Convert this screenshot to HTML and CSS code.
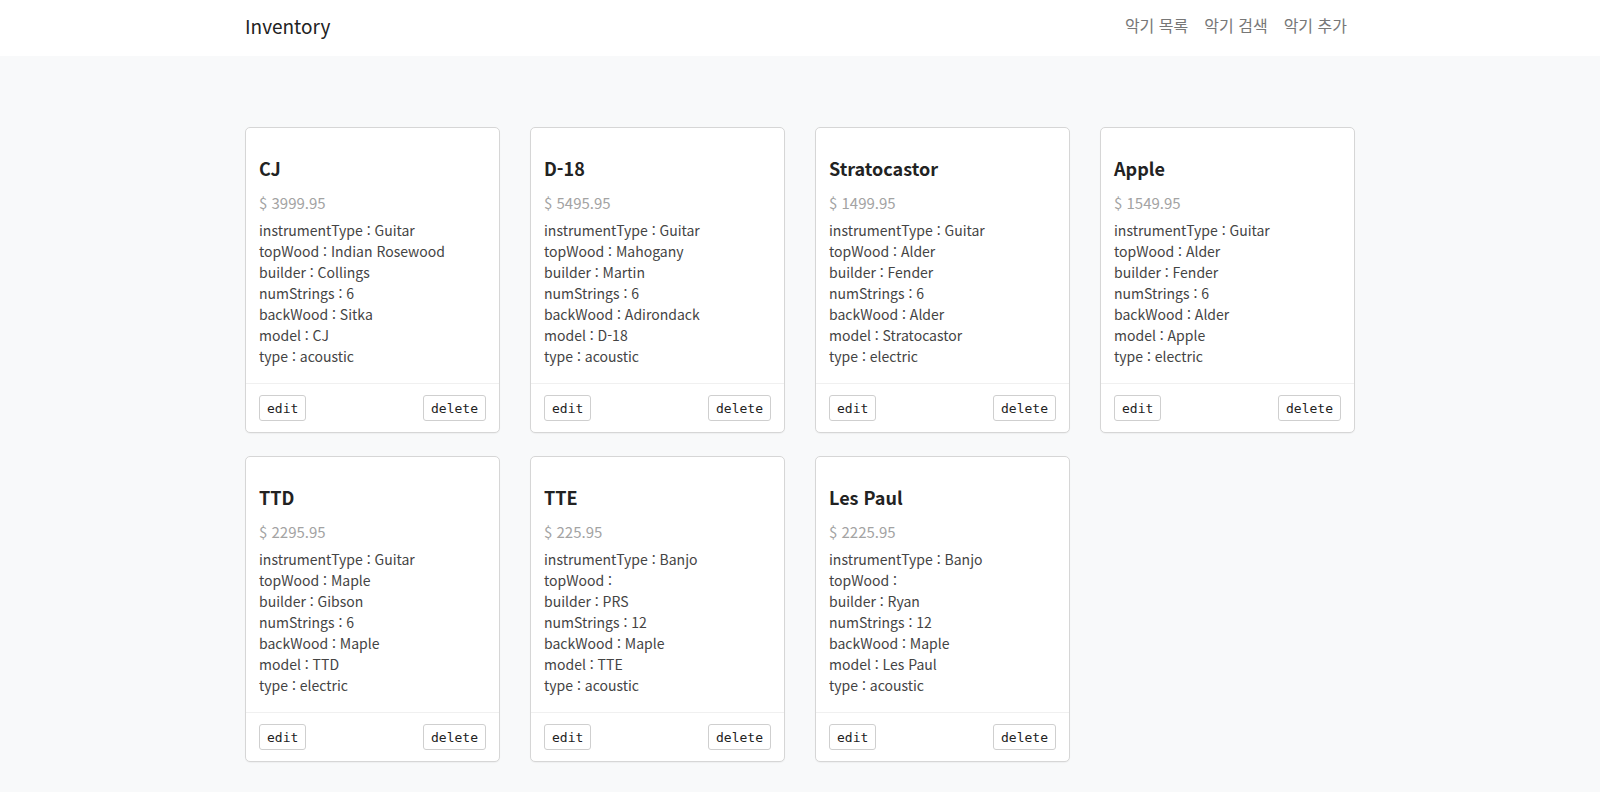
FILE: index.html
```html
<!DOCTYPE html>
<html lang="ko">
<head>
<meta charset="utf-8">
<title>Inventory</title>
<link rel="stylesheet" href="styles.css">
</head>
<body>
<nav class="navbar">
  <div class="container nav-inner">
    <a class="brand" href="#">Inventory</a>
    <ul class="nav-links">
      <li><a href="#">악기 목록</a></li>
      <li><a href="#">악기 검색</a></li>
      <li><a href="#">악기 추가</a></li>
    </ul>
  </div>
</nav>
<main class="container main">
  <div class="grid">
    <div class="card">
      <div class="card-body">
        <h5 class="card-title">CJ</h5>
        <p class="price">$ 3999.95</p>
        <p class="spec">instrumentType : Guitar</p>
        <p class="spec">topWood : Indian Rosewood</p>
        <p class="spec">builder : Collings</p>
        <p class="spec">numStrings : 6</p>
        <p class="spec">backWood : Sitka</p>
        <p class="spec">model : CJ</p>
        <p class="spec">type : acoustic</p>
      </div>
      <div class="card-footer"><button class="btn">edit</button><button class="btn">delete</button></div>
    </div>
    <div class="card">
      <div class="card-body">
        <h5 class="card-title">D-18</h5>
        <p class="price">$ 5495.95</p>
        <p class="spec">instrumentType : Guitar</p>
        <p class="spec">topWood : Mahogany</p>
        <p class="spec">builder : Martin</p>
        <p class="spec">numStrings : 6</p>
        <p class="spec">backWood : Adirondack</p>
        <p class="spec">model : D-18</p>
        <p class="spec">type : acoustic</p>
      </div>
      <div class="card-footer"><button class="btn">edit</button><button class="btn">delete</button></div>
    </div>
    <div class="card">
      <div class="card-body">
        <h5 class="card-title">Stratocastor</h5>
        <p class="price">$ 1499.95</p>
        <p class="spec">instrumentType : Guitar</p>
        <p class="spec">topWood : Alder</p>
        <p class="spec">builder : Fender</p>
        <p class="spec">numStrings : 6</p>
        <p class="spec">backWood : Alder</p>
        <p class="spec">model : Stratocastor</p>
        <p class="spec">type : electric</p>
      </div>
      <div class="card-footer"><button class="btn">edit</button><button class="btn">delete</button></div>
    </div>
    <div class="card">
      <div class="card-body">
        <h5 class="card-title">Apple</h5>
        <p class="price">$ 1549.95</p>
        <p class="spec">instrumentType : Guitar</p>
        <p class="spec">topWood : Alder</p>
        <p class="spec">builder : Fender</p>
        <p class="spec">numStrings : 6</p>
        <p class="spec">backWood : Alder</p>
        <p class="spec">model : Apple</p>
        <p class="spec">type : electric</p>
      </div>
      <div class="card-footer"><button class="btn">edit</button><button class="btn">delete</button></div>
    </div>
    <div class="card">
      <div class="card-body">
        <h5 class="card-title">TTD</h5>
        <p class="price">$ 2295.95</p>
        <p class="spec">instrumentType : Guitar</p>
        <p class="spec">topWood : Maple</p>
        <p class="spec">builder : Gibson</p>
        <p class="spec">numStrings : 6</p>
        <p class="spec">backWood : Maple</p>
        <p class="spec">model : TTD</p>
        <p class="spec">type : electric</p>
      </div>
      <div class="card-footer"><button class="btn">edit</button><button class="btn">delete</button></div>
    </div>
    <div class="card">
      <div class="card-body">
        <h5 class="card-title">TTE</h5>
        <p class="price">$ 225.95</p>
        <p class="spec">instrumentType : Banjo</p>
        <p class="spec">topWood : </p>
        <p class="spec">builder : PRS</p>
        <p class="spec">numStrings : 12</p>
        <p class="spec">backWood : Maple</p>
        <p class="spec">model : TTE</p>
        <p class="spec">type : acoustic</p>
      </div>
      <div class="card-footer"><button class="btn">edit</button><button class="btn">delete</button></div>
    </div>
    <div class="card">
      <div class="card-body">
        <h5 class="card-title">Les Paul</h5>
        <p class="price">$ 2225.95</p>
        <p class="spec">instrumentType : Banjo</p>
        <p class="spec">topWood : </p>
        <p class="spec">builder : Ryan</p>
        <p class="spec">numStrings : 12</p>
        <p class="spec">backWood : Maple</p>
        <p class="spec">model : Les Paul</p>
        <p class="spec">type : acoustic</p>
      </div>
      <div class="card-footer"><button class="btn">edit</button><button class="btn">delete</button></div>
    </div>
  </div>
</main>
</body>
</html>
```

FILE: styles.css
```css
* { box-sizing: border-box; }
html, body { margin: 0; padding: 0; }
body {
  background: #f8f9fa;
  font-family: "Noto Sans CJK KR", "Noto Sans", sans-serif;
  color: #444;
}
.container {
  width: 1110px;
  margin: 0 auto;
}
.navbar {
  background: #fff;
  height: 56px;
}
.nav-inner {
  height: 56px;
  padding-bottom: 6px;
  display: flex;
  align-items: center;
  justify-content: space-between;
}
.brand {
  font-size: 19px;
  color: #222;
  text-decoration: none;
  line-height: 1;
}
.nav-links {
  list-style: none;
  margin: 0;
  padding: 0;
  display: flex;
}
.nav-links a {
  display: block;
  padding: 0 8px;
  font-size: 16px;
  color: #777;
  text-decoration: none;
}
.main {
  padding-top: 71px;
  padding-bottom: 40px;
}
.grid {
  display: grid;
  grid-template-columns: repeat(4, 255px);
  column-gap: 30px;
  row-gap: 23px;
}
.card {
  background: #fff;
  border: 1px solid #d6d6d6;
  border-radius: 5px;
  box-shadow: 0 1px 1px rgba(0,0,0,0.04);
  display: flex;
  flex-direction: column;
}
.card-body {
  padding: 30px 13px 16px;
}
.card-title {
  margin: 0 0 12px;
  font-size: 18px;
  font-weight: 700;
  line-height: 1.2;
  color: #222;
}
.price {
  margin: 0 0 6px;
  font-size: 15px;
  line-height: 1.5;
  color: #a3a3a3;
}
.spec {
  margin: 0;
  font-size: 14px;
  line-height: 21px;
  color: #444;
}
.card-footer {
  border-top: 1px solid #f0f0f0;
  padding: 11px 13px 11px;
  display: flex;
  justify-content: space-between;
}
.btn {
  font-family: "DejaVu Sans Mono", "Liberation Mono", monospace;
  font-size: 13px;
  height: 26px;
  padding: 0 7px;
  background: #fff;
  border: 1px solid #cfcfcf;
  border-radius: 3px;
  color: #222;
}
```
